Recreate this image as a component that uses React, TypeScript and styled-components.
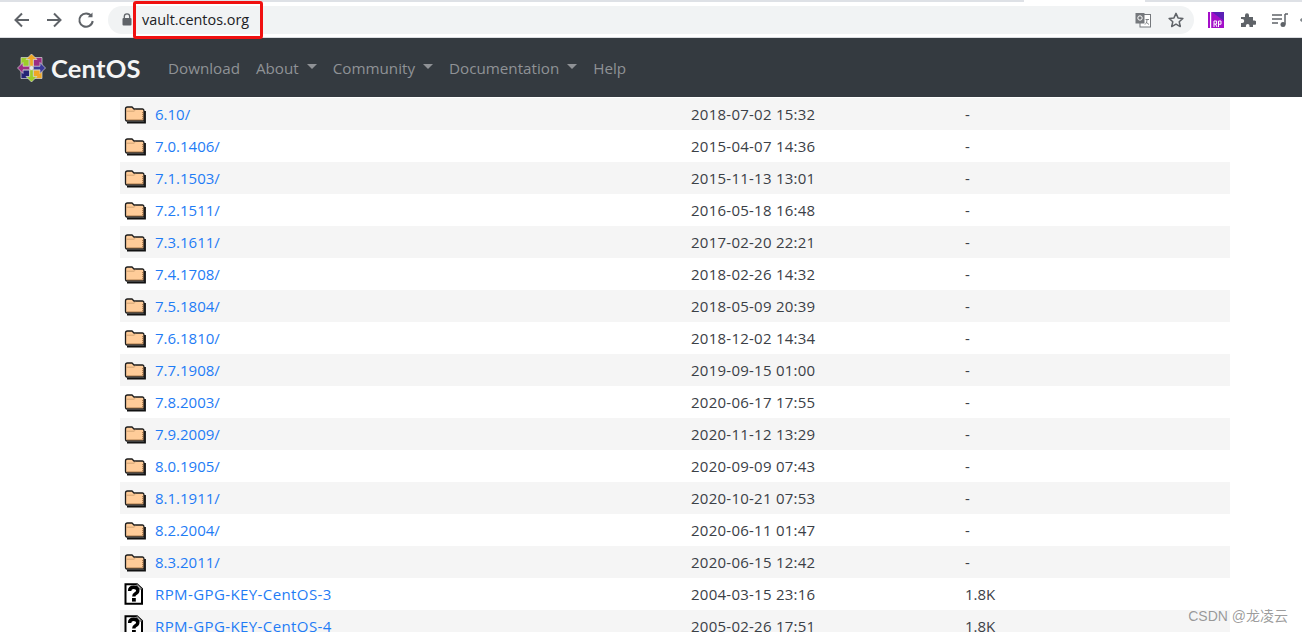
import React from "react";
import styled, { createGlobalStyle } from "styled-components";

const Global = createGlobalStyle`
  html, body { margin: 0; padding: 0; height: 632px; overflow: hidden; background: #fff; }
  * { box-sizing: border-box; }
  body { font-family: "Open Sans", "Noto Sans", sans-serif; }
`;

const Page = styled.div`
  position: relative;
  width: 1302px;
  height: 632px;
  overflow: hidden;
  background: #fff;
`;

const TabStrip = styled.div`
  height: 2px;
  background: #dee1e6;
  padding-left: 1024px;
`;

const ActiveTab = styled.div`
  width: 121px;
  height: 2px;
  background: #fff;
`;

const BrowserBar = styled.div`
  height: 36px;
  display: flex;
  align-items: center;
  background: #fff;
  padding-left: 12px;
  border-bottom: 1px solid #dadce0;
  overflow: hidden;
`;

const NavIcons = styled.div`
  display: flex;
  align-items: center;
  gap: 12px;
  width: 96px;
  flex: none;
`;

const NavIconSvg = styled.svg`
  width: 20px;
  height: 20px;
  fill: none;
  stroke: #5f6368;
  stroke-width: 2;
  flex: none;
`;

const Omnibox = styled.div`
  width: 1086px;
  height: 28px;
  border-radius: 14px;
  background: #f1f3f4;
  display: flex;
  align-items: center;
  padding: 0 9px 0 14px;
  flex: none;
`;

const UrlText = styled.span`
  font-family: "Open Sans", sans-serif;
  font-size: 14.4px;
  color: #202124;
  margin-left: 10px;
  flex: 1;
`;

const OmniIcons = styled.div`
  display: flex;
  align-items: center;
  gap: 16px;
`;

const Extensions = styled.div`
  display: flex;
  align-items: center;
  gap: 16px;
  margin-left: 14px;
  flex: none;
`;

const AccountDot = styled.span`
  width: 16px;
  height: 6px;
  margin-left: -4px;
  border-radius: 50%;
  background: #80868b;
  flex: none;
`;

const UrlHighlight = styled.div`
  position: absolute;
  left: 133px;
  top: 1px;
  width: 130px;
  height: 38px;
  border: 3px solid #f01010;
  border-radius: 3px;
`;

const Navbar = styled.nav`
  height: 59px;
  background: #343a40;
  display: flex;
  align-items: center;
  padding-left: 17px;
`;

const Brand = styled.div`
  display: flex;
  align-items: center;
  gap: 5px;
  width: 151px;
  flex: none;
`;

const BrandName = styled.span`
  font-family: "Lato", sans-serif;
  font-size: 25.5px;
  font-weight: 700;
  letter-spacing: 0.2px;
  color: #f4f5f5;
`;

const NavLink = styled.span<{ $caret?: boolean }>`
  font-size: 15.2px;
  color: #8f9296;
  margin-right: 16px;
  display: flex;
  align-items: center;
  ${(p) =>
    p.$caret &&
    `&::after {
      content: "";
      margin-left: 8px;
      border-top: 5px solid #8f9296;
      border-left: 5px solid transparent;
      border-right: 5px solid transparent;
      margin-top: -2px;
    }`}
`;

const Listing = styled.div`
  margin: 1px 72px 0 120px;
`;

const Row = styled.div<{ $shade: boolean }>`
  height: 32px;
  display: grid;
  grid-template-columns: 35px 536px 274px 1fr;
  align-items: center;
  background: ${(p) => (p.$shade ? "#f5f5f5" : "#fff")};
  font-size: 15px;
  color: #3b4046;
`;

const IconCell = styled.div`
  display: flex;
  padding-left: 4px;
  align-items: center;
`;

const NameLink = styled.a<{ $file: boolean }>`
  color: #1f7cf5;
  text-decoration: none;
  letter-spacing: ${(p) => (p.$file ? "0.4px" : "0")};
`;

const DateText = styled.span`
  letter-spacing: 0.25px;
`;

const Watermark = styled.div`
  position: absolute;
  right: 14px;
  bottom: 7px;
  font-family: "Liberation Sans", "Noto Sans CJK SC", sans-serif;
  font-size: 14px;
  color: rgba(90, 90, 90, 0.6);
`;

const Folder = () => (
  <svg width="22" height="20" viewBox="0 0 22 20">
    <path d="M1.5 5 Q1.5 3 3.5 3 H8 L10 5 H18.5 Q20 5 20 7 V17 H3 Q1.5 17 1.5 15 Z" fill="#ffcc99" stroke="#1c1c1c" strokeWidth="1.3" />
    <path d="M2.5 7.2 H10 L11.5 6" stroke="#c89a6c" strokeWidth="0.8" fill="none" />
    <path d="M3 18.6 H21 V7" stroke="#111" strokeWidth="1.8" fill="none" />
    <path d="M3.5 15.8 H18.8 V8" stroke="#8a5a30" strokeWidth="1" strokeDasharray="1 1" fill="none" />
  </svg>
);

const Unknown = () => (
  <svg width="20" height="22" viewBox="0 0 20 22">
    <path d="M1.5 1.2 H13 L18 6 V20.8 H1.5 Z" fill="#fff" stroke="#000" strokeWidth="2" />
    <path d="M13 1 V6 H18" fill="#bbb" stroke="#555" strokeWidth="1" />
    <path d="M5.6 8 Q5.6 4.2 9.6 4.2 Q13.8 4.2 13.8 7.6 Q13.8 9.6 11.4 10.8 Q9.8 11.6 9.8 13.6" fill="none" stroke="#000" strokeWidth="3.4" />
    <rect x="8" y="15" width="3.8" height="3.6" fill="#000" />
  </svg>
);

const CentosMark = () => (
  <svg width="29" height="30" viewBox="0 0 29 29">
    <g stroke="#d8d8d8" strokeWidth="0.7">
      <path d="M3.5 3.5 H11.5 V12.5 H3.5 Z" transform="translate(0.5 0.5)" fill="#9ccd2a" />
      <path d="M16.5 3.5 H25 V12.5 H16.5 Z" fill="#9c2d85" transform="translate(0 0.5)" />
      <path d="M16.5 16.5 H25 V25 H16.5 Z" fill="#efa724" />
      <path d="M4 16.5 H12.5 V25 H4 Z" fill="#262577" />
      <path d="M14.5 0.5 L20 6 H16.3 V12.7 H12.7 V6 H9 Z" fill="#efa724" />
      <path d="M28.5 14.5 L23 20 V16.3 H16.3 V12.7 H23 V9 Z" fill="#3a3a9a" />
      <path d="M14.5 28.5 L9 23 H12.7 V16.3 H16.3 V23 H20 Z" fill="#9ccd2a" />
      <path d="M0.5 14.5 L6 9 V12.7 H12.7 V16.3 H6 V20 Z" fill="#9c2d85" />
    </g>
    <circle cx="14.5" cy="14.5" r="2" fill="#e8e8e8" />
  </svg>
);

const rows: [string, string, string, string][] = [
  ["d", "6.10/", "2018-07-02 15:32", "-"],
  ["d", "7.0.1406/", "2015-04-07 14:36", "-"],
  ["d", "7.1.1503/", "2015-11-13 13:01", "-"],
  ["d", "7.2.1511/", "2016-05-18 16:48", "-"],
  ["d", "7.3.1611/", "2017-02-20 22:21", "-"],
  ["d", "7.4.1708/", "2018-02-26 14:32", "-"],
  ["d", "7.5.1804/", "2018-05-09 20:39", "-"],
  ["d", "7.6.1810/", "2018-12-02 14:34", "-"],
  ["d", "7.7.1908/", "2019-09-15 01:00", "-"],
  ["d", "7.8.2003/", "2020-06-17 17:55", "-"],
  ["d", "7.9.2009/", "2020-11-12 13:29", "-"],
  ["d", "8.0.1905/", "2020-09-09 07:43", "-"],
  ["d", "8.1.1911/", "2020-10-21 07:53", "-"],
  ["d", "8.2.2004/", "2020-06-11 01:47", "-"],
  ["d", "8.3.2011/", "2020-06-15 12:42", "-"],
  ["f", "RPM-GPG-KEY-CentOS-3", "2004-03-15 23:16", "1.8K"],
  ["f", "RPM-GPG-KEY-CentOS-4", "2005-02-26 17:51", "1.8K"],
];

export default function App() {
  return (
    <Page>
      <Global />
      <TabStrip>
        <ActiveTab />
      </TabStrip>
      <BrowserBar>
        <NavIcons>
          <NavIconSvg viewBox="0 0 20 20"><path d="M17 10H4M10 3.5 3.5 10l6.5 6.5" /></NavIconSvg>
          <NavIconSvg viewBox="0 0 20 20"><path d="M3 10h13M10 3.5 16.5 10 10 16.5" /></NavIconSvg>
          <NavIconSvg viewBox="0 0 20 20"><path d="M15.5 6.2A6.7 6.7 0 1 0 16.7 11" /><path d="M16.5 2.5v4.8h-4.8" fill="#5f6368" stroke="none" /></NavIconSvg>
        </NavIcons>
        <Omnibox>
          <svg width="10" height="13" viewBox="0 0 10 13">
            <path d="M2.3 5V3.5a2.7 2.7 0 0 1 5.4 0V5" fill="none" stroke="#5f6368" strokeWidth="1.3" />
            <rect x=".5" y="5" width="9" height="7.5" rx="1" fill="#5f6368" />
          </svg>
          <UrlText>vault.centos.org</UrlText>
          <OmniIcons>
            <svg width="16" height="16" viewBox="0 0 16 16">
              <rect x="5" y="2.5" width="10.5" height="12.5" fill="#fff" stroke="#75787c" />
              <rect x=".5" y="1" width="9" height="10.5" fill="#75787c" />
              <circle cx="5" cy="6" r="2.2" fill="none" stroke="#fff" strokeWidth="1" />
              <path d="M10.5 7.5h3.5M12 7.5c0 2.5-1 4-2 5M11 10l3 2.5" stroke="#75787c" fill="none" strokeWidth=".9" />
            </svg>
            <svg width="18" height="18" viewBox="0 0 24 24">
              <path d="M12 3.2l2.7 6 6.5.7-4.9 4.4 1.4 6.4L12 17.4l-5.7 3.3 1.4-6.4-4.9-4.4 6.5-.7z" fill="none" stroke="#5f6368" strokeWidth="2" strokeLinejoin="round" />
            </svg>
          </OmniIcons>
        </Omnibox>
        <Extensions>
          <svg width="16" height="16" viewBox="0 0 16 16">
            <rect width="16" height="16" fill="#a40fc9" />
            <path d="M2 0h1.2v16H2z" fill="#fff" />
            <path d="M4 0h12v9z" fill="#5b1fb5" />
            <path d="M6 9v6M6 9h2.6v3H6M7.5 12l1.5 3M10.5 15V9H13v3.2h-2.5" stroke="#fff" strokeWidth="1" fill="none" />
          </svg>
          <svg width="16" height="16" viewBox="0 0 16 16">
            <path d="M1 5h4V3.3a2 2 0 0 1 4 0V5h4v3.6h1.3a2.1 2.1 0 0 1 0 4.2H13V15H9.5v-1.3a1.8 1.8 0 0 0-3.6 0V15H1v-4h1.2a2 2 0 0 0 0-4H1z" fill="#5f6368" />
          </svg>
          <svg width="16" height="16" viewBox="0 0 16 16">
            <path d="M0 3h10M0 7h10M0 11h6" stroke="#5f6368" strokeWidth="1.5" fill="none" />
            <path d="M13 2v10.5" stroke="#5f6368" strokeWidth="1.5" fill="none" />
            <path d="M13 2h3" stroke="#5f6368" strokeWidth="1.5" />
            <circle cx="11" cy="12.5" r="2.5" fill="#5f6368" />
          </svg>
          <AccountDot />
        </Extensions>
      </BrowserBar>
      <UrlHighlight />
      <Navbar>
        <Brand>
          <CentosMark />
          <BrandName>CentOS</BrandName>
        </Brand>
        <NavLink>Download</NavLink>
        <NavLink $caret>About</NavLink>
        <NavLink $caret>Community</NavLink>
        <NavLink $caret>Documentation</NavLink>
        <NavLink>Help</NavLink>
      </Navbar>
      <Listing>
        {rows.map(([kind, name, date, size], i) => (
          <Row key={name} $shade={i % 2 === 0}>
            <IconCell>{kind === "d" ? <Folder /> : <Unknown />}</IconCell>
            <NameLink href="#" $file={kind === "f"}>{name}</NameLink>
            <DateText>{date}</DateText>
            <span>{size}</span>
          </Row>
        ))}
      </Listing>
      <Watermark>CSDN @龙凌云</Watermark>
    </Page>
  );
}
